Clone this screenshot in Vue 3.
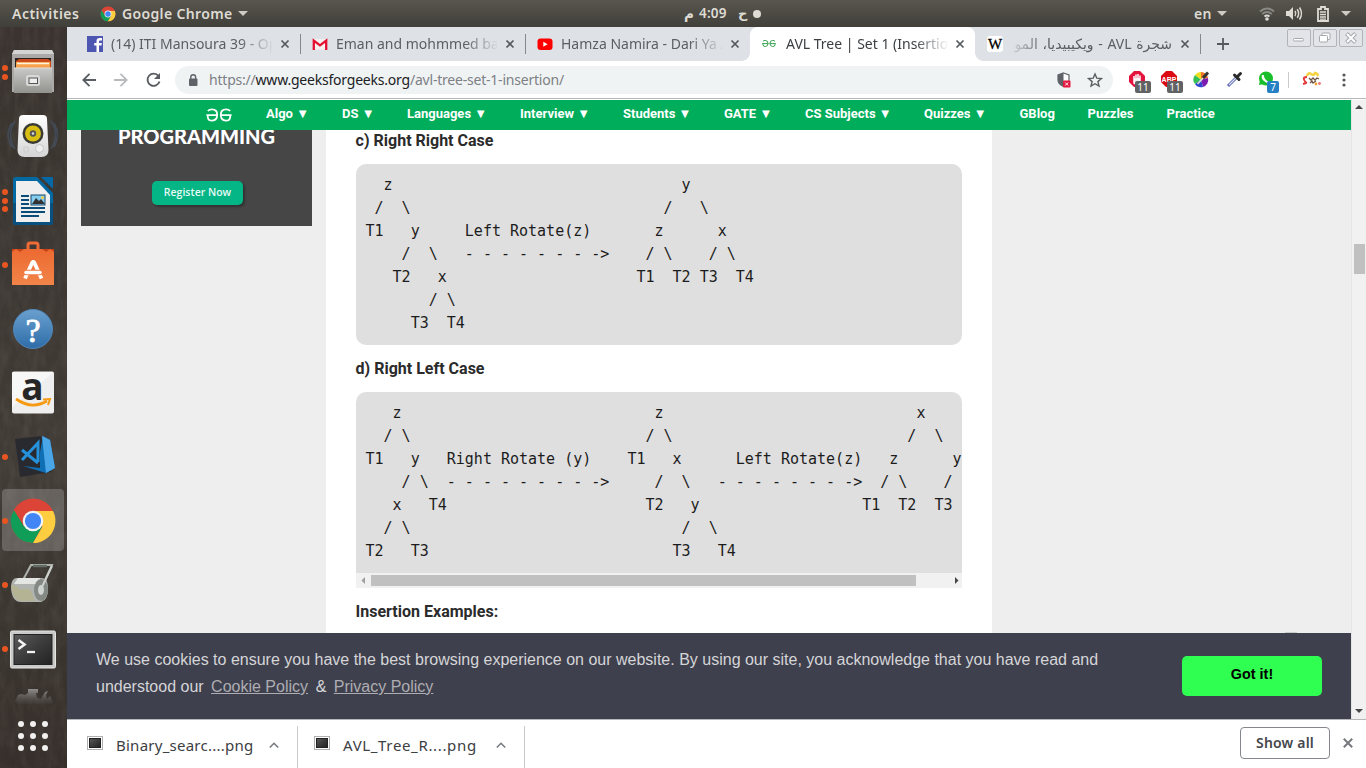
<script setup>
const place = (...items) =>
  items.reduce((line, [col, text]) => line.padEnd(col, ' ') + text, '')

const rightRight = [
  place([2, 'z'], [35, 'y']),
  place([1, '/'], [4, '\\'], [33, '/'], [37, '\\']),
  place([0, 'T1'], [5, 'y'], [11, 'Left Rotate(z)'], [32, 'z'], [39, 'x']),
  place([4, '/'], [7, '\\'], [11, '- - - - - - - ->'], [31, '/'], [33, '\\'], [38, '/'], [40, '\\']),
  place([3, 'T2'], [8, 'x'], [30, 'T1'], [34, 'T2'], [37, 'T3'], [41, 'T4']),
  place([7, '/'], [9, '\\']),
  place([5, 'T3'], [9, 'T4']),
].join('\n')

const rightLeft = [
  place([3, 'z'], [32, 'z'], [61, 'x']),
  place([2, '/'], [4, '\\'], [31, '/'], [33, '\\'], [60, '/'], [63, '\\']),
  place([0, 'T1'], [5, 'y'], [9, 'Right Rotate (y)'], [29, 'T1'], [34, 'x'], [41, 'Left Rotate(z)'], [58, 'z'], [65, 'y']),
  place([4, '/'], [6, '\\'], [9, '- - - - - - - - ->'], [32, '/'], [35, '\\'], [39, '- - - - - - - ->'], [57, '/'], [59, '\\'], [64, '/']),
  place([3, 'x'], [7, 'T4'], [31, 'T2'], [36, 'y'], [55, 'T1'], [59, 'T2'], [63, 'T3']),
  place([2, '/'], [4, '\\'], [35, '/'], [38, '\\']),
  place([0, 'T2'], [5, 'T3'], [34, 'T3'], [39, 'T4']),
].join('\n')

const tabs = [
  { id: 'fb', title: '(14) ITI Mansoura 39 - Op' },
  { id: 'gmail', title: 'Eman and mohmmed ba' },
  { id: 'yt', title: 'Hamza Namira - Dari Ya A' },
  { id: 'gfg', title: 'AVL Tree | Set 1 (Insertion', active: true },
  { id: 'wiki', title: 'شجرة AVL - ويكيبيديا، المو', rtl: true },
]

const menu = ['Algo ▼', 'DS ▼', 'Languages ▼', 'Interview ▼', 'Students ▼', 'GATE ▼', 'CS Subjects ▼', 'Quizzes ▼', 'GBlog', 'Puzzles', 'Practice']

const dock = [
  { id: 'files', dots: 2 }, { id: 'music', dots: 0 }, { id: 'writer', dots: 3 }, { id: 'software', dots: 1 },
  { id: 'help', dots: 0 }, { id: 'amazon', dots: 0 }, { id: 'code', dots: 1 }, { id: 'chrome', dots: 1, active: true },
  { id: 'scan', dots: 1 }, { id: 'term', dots: 1 },
]
const downloads = [
  { name: 'Binary_searc....png', cls: 'd1' },
  { name: 'AVL_Tree_R....png', cls: 'd2' },
]
</script>

<template>
  <div class="desktop">
    <svg class="defs" width="0" height="0">
      <defs>
        <symbol id="chrome" viewBox="0 0 48 48">
          <circle cx="24" cy="24" r="22" fill="#db4437" />
          <path d="M24 24 4.9 13A22 22 0 0 0 24 46L33 30Z" fill="#109d58" />
          <path d="M24 46A22 22 0 0 0 44 14H24L33.5 29.5Z" fill="#ffcd40" />
          <path d="M24 14H44A22 22 0 0 0 4.9 13L15 29.500Z" fill="#db4437" />
          <circle cx="24" cy="24" r="10.300" fill="#f4f4f4" />
          <circle cx="24" cy="24" r="8.100" fill="#4285f4" />
        </symbol>
        <symbol id="gfg" viewBox="0 0 26 14">
          <path d="M1.800 3Q3.300 1.300 6 1.300q5.200 0 5.200 5.500T6.200 12.700Q2 12.700 1.800 9V7.200M.4 7.200H11.800M24.200 3Q22.700 1.300 20 1.300q-5.200 0-5.200 5.500t5 5.900Q24 12.700 24.200 9V7.200M25.600 7.200H14.200" fill="none" stroke="currentColor" stroke-width="1.800" />
        </symbol>
      </defs>
    </svg>

    <header class="topbar">
      <span class="activities">Activities</span>
      <svg class="tb-chrome" width="16" height="16"><use href="#chrome" /></svg>
      <span class="app">Google Chrome</span>
      <svg class="caret" width="10" height="5"><path d="M0 0h10L5 5z" fill="#cfccc6" /></svg>
      <div class="clock"><span class="ar m">م</span><span class="time">4:09</span><span class="ar h">ح</span><i /></div>
      <div class="status">
        <span class="lang">en</span>
        <svg class="s-c" width="10" height="5"><path d="M0 0h10L5 5z" fill="#cfccc6" /></svg>
        <svg class="s-wifi" width="16" height="14" viewBox="0 0 16 14" fill="none" stroke-width="2">
          <path d="M1 4.500Q8-1.500 15 4.500" stroke="#8a8882" /><path d="M3.200 7Q8 3 12.800 7" stroke="#8a8882" /><path d="M5.500 9.500Q8 7.500 10.500 9.500" stroke="#dedbd5" /><circle cx="8" cy="12" r="1.800" fill="#dedbd5" />
        </svg>
        <svg class="s-vol" width="17" height="15" viewBox="0 0 17 15" fill="none" stroke="#dedbd5" stroke-width="1.500">
          <path d="M0 5h3l4-4v13l-4-4H0z" fill="#dedbd5" stroke="none" /><path d="M9 5q1.600 2.500 0 5M11.200 3.200q3 4.300 0 8.600M13.500 1.500q4 6 0 12" />
        </svg>
        <svg class="s-bat" width="12" height="16" viewBox="0 0 12 16"><path d="M1 3h3V1h4v2h3v12H1z" fill="none" stroke="#dedbd5" stroke-width="1.800" /><path d="M3 6h6M3 8.500h6M3 11h6M3 13.200h6" stroke="#dedbd5" stroke-width="1.300" /></svg>
        <svg class="s-c2" width="10" height="5"><path d="M0 0h10L5 5z" fill="#cfccc6" /></svg>
      </div>
    </header>

    <div class="body">
      <aside class="dock">
        <svg class="grain" width="67" height="741">
          <filter id="g"><feTurbulence type="fractalNoise" baseFrequency=".13 .05" numOctaves="3" seed="4" /><feColorMatrix values="0 0 0 0 .55  0 0 0 0 .5  0 0 0 0 .45  .9 .5 0 0 -.55" /></filter>
          <rect width="67" height="741" filter="url(#g)" opacity=".16" />
        </svg>
        <div v-for="d in dock" :key="d.id" class="cell" :class="{ on: d.active }">
          <div class="dots"><i v-for="n in d.dots" :key="n" /></div>
          <svg width="48" height="48" viewBox="0 0 48 48">
            <defs>
              <linearGradient id="silver" x1="0" y1="0" x2="0" y2="1"><stop offset="0" stop-color="#c9c9c7" /><stop offset="1" stop-color="#92928f" /></linearGradient>
              <linearGradient id="white" x1="0" y1="0" x2="0" y2="1"><stop offset="0" stop-color="#fff" /><stop offset="1" stop-color="#d5d5d5" /></linearGradient>
              <linearGradient id="blue" x1="0" y1="0" x2="0" y2="1"><stop offset="0" stop-color="#6aa0cf" /><stop offset="1" stop-color="#2e6ca8" /></linearGradient>
              <linearGradient id="orange" x1="0" y1="0" x2="0" y2="1"><stop offset="0" stop-color="#ec6a31" /><stop offset="1" stop-color="#f28449" /></linearGradient>
              <linearGradient id="dark" x1="0" y1="0" x2="1" y2="1"><stop offset="0" stop-color="#5b5b5b" /><stop offset=".5" stop-color="#3c3c3c" /><stop offset="1" stop-color="#222" /></linearGradient>
            </defs>
            <g v-if="d.id === 'files'">
              <path d="M5 1h38l2 4v38H3V5z" fill="#aaa9a7" /><path d="M5 1h38l2 4H3z" fill="#d4d4d2" />
              <path d="M6 9h36v12H6z" fill="#2b211d" /><path d="M7 12l3-2h29l3 2v8H7z" fill="#c94a1c" /><path d="M7 13h34v8H7z" fill="#f7a24a" /><path d="M8 14.500h32" stroke="#fff1df" stroke-width="1.500" />
              <path d="M5 19h38v25H5z" fill="url(#silver)" /><path d="M5 19h38" stroke="#dedede" />
              <rect x="17" y="26" width="14" height="11" rx="2.500" fill="#d8d8d6" /><rect x="20" y="29" width="8.500" height="5.500" fill="#eee" stroke="#555" />
            </g>
            <g v-else-if="d.id === 'music'">
              <path d="M6 8Q-3 22 6 36M42 8Q51 22 42 36M3 10Q-5 22 3 34M45 10Q52 22 45 34" stroke="#46576d" stroke-width="1.600" fill="none" opacity=".6" />
              <path d="M14 2h20q4 0 4 4l1.500 31q0 7-7 7h-17q-7 0-7-7L10 6q0-4 4-4z" fill="url(#white)" />
              <circle cx="24" cy="20.500" r="10.500" fill="#3a3a34" /><circle cx="24" cy="20.500" r="8" fill="#d8be12" /><circle cx="24" cy="20.500" r="3.200" fill="#555" /><circle cx="24" cy="20.500" r="1.200" fill="#ddd" />
              <circle cx="30.500" cy="35.500" r="4" fill="#eee" stroke="#c5c5c5" /><rect x="15" y="34" width="4" height="5" fill="none" stroke="#ccc" />
            </g>
            <g v-else-if="d.id === 'writer'">
              <path d="M7 0h21l16 16v29q0 3-3 3H7q-3 0-3-3V3q0-3 3-3z" fill="#0369a3" /><path d="M4 26h40v19q0 3-3 3H7q-3 0-3-3z" fill="#075080" />
              <path d="M32 0h12v12z" fill="#0668a6" /><path d="M7 4h21l13 14v27H7z" fill="#efefef" />
              <path d="M12 19h8M12 23h8M12 27h8M12 31h24M12 35h24M12 39h18" stroke="#0a4d78" stroke-width="2" />
              <rect x="22" y="18" width="14" height="10" fill="#84cdef" stroke="#164b6d" /><path d="M23 27l4-6 3 3 2-2 4 5z" fill="#333" /><circle cx="33.500" cy="20.500" r="1.500" fill="#f5d048" />
            </g>
            <g v-else-if="d.id === 'software'">
              <path d="M3 8h42v36H3z" fill="#c94317" /><path d="M3 11l4-3 4 3 4-3h18l4 3 4-3 4 3v33H3z" fill="url(#orange)" />
              <path d="M19 13V4q0-2 2-2h6q2 0 2 2v9" fill="none" stroke="#f06a35" stroke-width="3" />
              <path d="M16 37.500l7.500-16.500h1.500l7.500 16.500" fill="none" stroke="#fff" stroke-width="3.800" stroke-linejoin="bevel" /><path d="M17 31.500h14" stroke="#f17a42" stroke-width="5.500" stroke-linecap="round" /><path d="M17 31.500h14" stroke="#fff" stroke-width="3.500" stroke-linecap="round" />
            </g>
            <g v-else-if="d.id === 'help'">
              <circle cx="24" cy="24" r="19.500" fill="url(#blue)" stroke="#5188b9" /><text x="24" y="36.500" class="q">?</text>
            </g>
            <g v-else-if="d.id === 'amazon'">
              <rect x="3" y="2.500" width="42" height="42" rx="2" fill="#eee" /><path d="M3 3h42L3 38z" fill="#fff" opacity=".5" />
              <text x="23.500" y="30.500" class="a">a</text><path d="M7 30q16 11 31 2" stroke="#f59a12" stroke-width="2.800" fill="none" /><path d="M34 30.500l7-.500-2 6" stroke="#f59a12" stroke-width="2" fill="none" />
            </g>
            <g v-else-if="d.id === 'code'">
              <path d="M6 6l26-3 10 36-31 5z" fill="#292a30" />
              <path d="M14 33l17 2V19l3-16 7 4 5 28-9 5z" fill="#0f6fb5" /><path d="M33 3l4 37 9-5-5-28z" fill="#4ba6e8" /><path d="M13 17l16 13M13 27l16-17V29" stroke="#2491da" stroke-width="3" fill="none" />
            </g>
            <use v-else-if="d.id === 'chrome'" href="#chrome" />
            <g v-else-if="d.id === 'scan'">
              <path d="M14 19l8-15h21L33 26" stroke="#aeb3ae" stroke-width="2" fill="none" /><path d="M24 5h14" stroke="#646c66" stroke-width="2.500" />
              <path d="M7 17h26q6 0 6 11t-7 13H12Q3 41 2 27q0-9 5-10z" fill="#b0b3b0" /><path d="M9 17h22v6H5z" fill="#e4e6e4" /><path d="M2 24l6 1 2 3h11l5 12H11Q3 38 2 24z" fill="#b4b494" />
              <ellipse cx="32" cy="29" rx="7" ry="11" fill="#848984" /><ellipse cx="32" cy="29" rx="3" ry="5" fill="#d0d3d0" /><path d="M32 28L43 5" stroke="#cdd0cd" stroke-width="2" />
            </g>
            <g v-else>
              <rect x="1.500" y="6" width="45" height="37" rx="1.500" fill="#c9cac8" stroke="#e5e5e4" /><rect x="5" y="9.500" width="38" height="30" fill="url(#dark)" stroke="#222" />
              <path d="M9.500 15l6 4.500-6 4.500" fill="none" stroke="#f2f2f2" stroke-width="2.600" /><path d="M18 27h8" stroke="#f2f2f2" stroke-width="2.300" />
            </g>
          </svg>
        </div>
        <svg class="folded" width="42" height="16" viewBox="0 0 42 16"><linearGradient id="fade" x1="0" y1="0" x2="0" y2="1"><stop offset="0" stop-color="#908f8d" /><stop offset="1" stop-color="#655f5b" stop-opacity=".1" /></linearGradient><path d="M1 13l3-6 3-1 4 1 3-2V1h10v4h-2l1 5 4 1 4-7 3-1-2 4 1 4 3-3 3 6-2 2H3z" fill="url(#fade)" /></svg>
        <div class="apps"><i v-for="n in 9" :key="n" /></div>
      </aside>

      <main class="window">
        <div class="tabstrip">
          <div v-for="(t, i) in tabs" :key="t.id" class="tab" :class="[t.id, { active: t.active, sep: i < 2 || i === 4 }]">
            <svg v-if="t.id === 'fb'" class="fav" width="16" height="16"><rect width="16" height="16" fill="#4d56b0" /><path d="M9.500 16V9.500H7.200V7h2.300V5.300Q9.500 2 12.600 2H15v2.500h-1.700q-1.300 0-1.300 1.200V7h2.900l-.4 2.500H12V16z" fill="#fff" /></svg>
            <svg v-else-if="t.id === 'gmail'" class="fav" width="16" height="16"><path d="M1.500 3h13v10.500h-13z" fill="#f4f0ef" /><path d="M1.800 14V4.500L8 9.300l6.200-4.800V14" fill="none" stroke="#e50f32" stroke-width="2.300" /></svg>
            <svg v-else-if="t.id === 'yt'" class="fav" width="16" height="16"><rect x="0.500" y="2.500" width="15" height="11.500" rx="3" fill="#f00" /><path d="M6.300 5.700v5L10.600 8.200z" fill="#fff" /></svg>
            <svg v-else-if="t.id === 'gfg'" class="fav green" width="16" height="16"><use href="#gfg" x="0" y="3.500" width="14" height="8" /></svg>
            <svg v-else class="fav" width="16" height="16"><rect width="16" height="16" rx="3" fill="#fff" /><text x="8" y="13" class="w">W</text></svg>
            <span class="title" :dir="t.rtl ? 'rtl' : 'ltr'">{{ t.title }}</span>
            <svg class="x" width="8" height="8"><path d="M.5.500l7 7M7.500.500l-7 7" stroke="#54585c" stroke-width="1.700" /></svg>
          </div>
          <svg class="plus" width="12" height="12"><path d="M6 0v12M0 6h12" stroke="#55595e" stroke-width="1.800" /></svg>
          <div class="wm">
            <span><svg width="24" height="18"><rect x="6.500" y="9.500" width="10" height="2.500" rx="1" fill="#fff" stroke="#a5a7ad" /></svg></span>
            <span><svg width="24" height="18" fill="#fff" stroke="#a5a7ad"><rect x="9" y="4" width="8" height="6.500" rx="1" /><rect x="6.500" y="6.500" width="8" height="6.500" rx="1" /></svg></span>
            <span><svg width="24" height="18"><path d="M7.500 4.500l9 9M16.500 4.500l-9 9" stroke="#a5a7ad" stroke-width="4" /><path d="M8 5l8 8M16 5l-8 8" stroke="#fff" stroke-width="2" /></svg></span>
          </div>
        </div>

        <div class="toolbar">
          <svg class="back" width="14" height="14" fill="none" stroke="#5a5d61" stroke-width="1.800"><path d="M14 7H1.500M7.500.800L1.300 7l6.200 6.200" /></svg>
          <svg class="fwd" width="14" height="14" fill="none" stroke="#b8babc" stroke-width="1.800"><path d="M0 7h12.500M6.500.800L12.700 7l-6.200 6.200" /></svg>
          <svg class="reload" width="16" height="16" fill="none" stroke="#5a5d61" stroke-width="1.900"><path d="M12.500 4A6.100 6.100 0 1 0 13.500 9.500" /><path d="M14 1v6H8z" fill="#5a5d61" stroke="none" /></svg>
          <div class="omni">
            <svg class="lock" width="10" height="12"><rect x="1" y="4.500" width="8.500" height="7.500" rx="1" fill="#5f6368" /><path d="M2.800 5V3q0-2.300 2.400-2.300T7.600 3v2" fill="none" stroke="#5f6368" stroke-width="1.400" /></svg>
            <span class="url">https://<b>www.geeksforgeeks.org</b>/avl-tree-set-1-insertion/</span>
            <svg class="shield" width="15" height="16"><path d="M6.500 1L12 3v5q0 4-5.500 6.500Q1 12 1 8V3z" fill="#fff" stroke="#5f6368" stroke-width="1.200" /><path d="M6.500 1v13.500Q1 12 1 8V3z" fill="#5f6368" /><rect x="6" y="8.500" width="7.500" height="7" rx="1" fill="#e5173f" /><path d="M8.200 10.500l3 3M11.200 10.500l-3 3" stroke="#fff" /></svg>
            <svg class="star" width="14" height="14"><path d="M7 1l1.800 4.200 4.600.4-3.500 3 1.100 4.500L7 10.700l-4 2.400 1.100-4.500-3.500-3 4.600-.4z" fill="none" stroke="#5a5d61" stroke-width="1.400" /></svg>
          </div>
          <div class="ext e1"><svg width="18" height="18"><path d="M5 0h6l5 5v6l-5 5H5l-5-5V5z" fill="#e3133c" /><path d="M5 9V5M7 8V3.500M9 8V3M11 8.500V4.500M5 8h6v4q-3 3-6 0z" stroke="#fff" stroke-width="1.500" fill="#eee" /></svg><em>11</em></div>
          <div class="ext e2"><svg width="18" height="18"><path d="M5 0h6l5 5v6l-5 5H5l-5-5V5z" fill="#db0a12" /><text x="8" y="10.500" class="abp">ABP</text></svg><em>11</em></div>
          <svg class="e3" width="18" height="17"><path d="M8 8.500V1a7.500 7.500 0 0 1 7 6z" fill="#f17425" /><path d="M8 8.500l7-1.500a7.500 7.500 0 0 1-5 9z" fill="#7d1bb0" /><path d="M8 8.500l2 7.500a7.500 7.500 0 0 1-8-3z" fill="#3144ce" /><path d="M8 8.500L2 13a7.500 7.500 0 0 1 0-9z" fill="#35bf55" /><path d="M8 8.500L2 4a7.500 7.500 0 0 1 6-3z" fill="#f1dd22" /><path d="M4.500 13L12 5" stroke="#ddd" stroke-width="1.600" /><path d="M10 7l5-5.500" stroke="#333" stroke-width="3" /></svg>
          <svg class="e4" width="17" height="17"><path d="M2 15L11 6" stroke="#5862b2" stroke-width="3" /><path d="M3 14l7-7" stroke="#d8dcf5" stroke-width="1.300" /><path d="M8.500 4l4.500 4.500M11 6l3.500-3.500" stroke="#292929" stroke-width="3" stroke-linecap="round" /></svg>
          <div class="ext e5"><svg width="18" height="18"><circle cx="8" cy="7.500" r="7" fill="#19bf2b" /><path d="M1 14l1-5 4 4z" fill="#19bf2b" /><path d="M5 4q-1 3 2 5.500t4 1.500" stroke="#fff" stroke-width="2.200" fill="none" /></svg><em class="blue">7</em></div>
          <i class="vr" />
          <svg class="avatar" width="20" height="16"><path d="M5 4q1-4 4-2t4-1q4 1 2 3" fill="none" stroke="#f5d23c" stroke-width="2.500" /><path d="M5 5q-4 0-3 2.500t2 3-3 1.500" fill="none" stroke="#e63a3a" stroke-width="2" /><path d="M7 6l2 2 2-2 2 2 2-2 2 1M8 11l2-2 1 2 3-2" fill="none" stroke="#6d5541" stroke-width="1.300" /><circle cx="14" cy="12" r="1.400" fill="#f3a32c" /><circle cx="17.500" cy="11.500" r="1.400" fill="#e77" /></svg>
          <svg class="kebab" width="4" height="14" fill="#54585c"><circle cx="2" cy="2" r="1.600" /><circle cx="2" cy="7" r="1.600" /><circle cx="2" cy="12" r="1.600" /></svg>
        </div>

        <div class="view">
          <div class="page">
            <nav class="nav">
              <svg class="logo" width="26" height="14"><use href="#gfg" /></svg>
              <span v-for="m in menu" :key="m">{{ m }}</span>
            </nav>
            <div class="cols">
              <div class="ad"><div class="prog">PROGRAMMING</div><div class="reg">Register Now</div></div>
              <article>
                <h3>c) Right Right Case</h3>
                <pre>{{ rightRight }}</pre>
                <h3 class="h2">d) Right Left Case</h3>
                <pre class="scroll">{{ rightLeft }}</pre>
                <div class="hbar"><svg width="15" height="15"><path d="M9 4v7L5.500 7.500z" fill="#9d9d9d" /></svg><div class="hthumb" /><svg width="15" height="15"><path d="M8 4v7l3.500-3.500z" fill="#464646" /></svg></div>
                <h3 class="h3">Insertion Examples:</h3>
              </article>
              <div class="nub" />
            </div>
            <div class="cookie">
              <p>We use cookies to ensure you have the best browsing experience on our website. By using our site, you acknowledge that you have read and<br>understood our <a>Cookie Policy</a> &amp; <a>Privacy Policy</a></p>
              <button>Got it!</button>
            </div>
          </div>
          <div class="vbar"><svg width="14" height="15"><path d="M3 9h8L7 5z" fill="#464646" /></svg><div class="vthumb" /><svg width="14" height="15"><path d="M3 5h8L7 9z" fill="#464646" /></svg></div>
        </div>

        <footer class="downloads">
          <div v-for="d in downloads" :key="d.name" class="dl" :class="d.cls">
            <svg width="16" height="14"><rect x=".5" y=".5" width="15" height="13" fill="#fff" stroke="#b0b0b0" /><rect x="2.500" y="2.500" width="11" height="9" fill="url(#dark)" stroke="#222" /></svg>
            <span>{{ d.name }}</span>
            <svg class="up" width="10" height="6"><path d="M.8 5.500L5 1.300l4.200 4.200" fill="none" stroke="#777a7e" stroke-width="1.600" /></svg>
          </div>
          <div class="showall">Show all</div>
          <svg class="dx" width="10" height="10"><path d="M.8.800l8.400 8.400M9.200.800L.8 9.200" stroke="#77797c" stroke-width="2" /></svg>
        </footer>
      </main>
    </div>
  </div>
</template>

<style>
body { margin: 0; overflow: hidden; }
</style>

<style scoped>
* { box-sizing: border-box; }
.desktop { width: 1366px; height: 768px; overflow: hidden; font-family: "Noto Sans", "DejaVu Sans", sans-serif; display: flex; flex-direction: column; }
.defs { position: absolute; }
svg { display: block; flex: none; overflow: visible; }
.topbar { height: 27px; flex: none; background: linear-gradient(#59564f, #403f39); color: #dedbd3; display: flex; align-items: center; font-weight: 600; font-size: 14px; line-height: 27px; white-space: nowrap; }
.activities { margin-left: 12px; width: 88px; letter-spacing: .5px; }
.app { width: 110px; margin-left: 6px; letter-spacing: .35px; }
.caret { margin-left: 6px; }
.clock { margin-left: 436px; display: flex; align-items: center; width: 90px; font-size: 13.500px; }
.ar { font-family: "DejaVu Sans", sans-serif; font-weight: 700; }
.m { width: 15px; }
.time { width: 39px; letter-spacing: .2px; }
.h { width: 15px; font-size: 13px; }
.clock i { width: 8px; height: 8px; border-radius: 50%; background: #dedbd3; }
.status { margin-left: auto; width: 172px; display: flex; align-items: center; }
.lang { width: 23px; letter-spacing: .3px; }
.s-wifi { margin-left: 32px; }
.s-vol { margin-left: 11px; }
.s-bat { margin-left: 14px; }
.s-c2 { margin-left: 12px; }
.body { flex: 1; display: flex; min-height: 0; }
.dock { width: 67px; flex: none; background: linear-gradient(#3a332f, #3c3732 30%, #413c36 60%, #362f2b); padding-top: 14px; position: relative; display: flex; flex-direction: column; }
.grain { position: absolute; left: 0; top: 0; overflow: hidden; }
.cell { height: 64px; display: flex; align-items: center; position: relative; flex: none; }
.cell.on::before { content: ""; position: absolute; left: 2px; top: 0; width: 62px; height: 62px; border-radius: 4px; background: rgba(255, 255, 255, .2); }
.cell svg { position: relative; }
.dots { width: 9px; display: flex; flex-direction: column; gap: 2.500px; padding: 0 0 1px 2px; position: relative; }
.dots i { width: 6px; height: 6px; border-radius: 50%; background: #ea5420; }
.q { font: 34px "Liberation Serif", serif; fill: #fff; stroke: #fff; stroke-width: .8px; text-anchor: middle; }
.a { font: 700 37px "Open Sans", sans-serif; fill: #262626; text-anchor: middle; }
.folded { margin: 7px 0 0 14px; position: relative; }
.apps { display: grid; grid-template-columns: repeat(3, 6px); gap: 6px; margin: 17px 0 0 18px; position: relative; }
.apps i { width: 6px; height: 6px; border-radius: 50%; background: #f2f1f0; }
.window { flex: 1; min-width: 0; display: flex; flex-direction: column; background: #fff; }
.tabstrip { height: 34px; flex: none; background: #dee1e6; padding-left: 8px; display: flex; position: relative; }
.tab { width: 225px; height: 34px; display: flex; align-items: center; padding-left: 12px; position: relative; }
.tab.sep::after { content: ""; position: absolute; right: -1px; top: 7px; width: 1px; height: 20px; background: #85888d; }
.tab.active { background: #fff; border-radius: 8px 8px 0 0; }
.tab.active::before, .tab.active::after { content: ""; position: absolute; bottom: 0; width: 8px; height: 8px; }
.tab.active::before { left: -8px; background: radial-gradient(circle at 0 0, transparent 7.500px, #fff 8px); }
.tab.active::after { right: -8px; background: radial-gradient(circle at 100% 0, transparent 7.500px, #fff 8px); }
.title { margin-left: 8px; width: 161px; font-size: 14px; color: #5b5e63; white-space: nowrap; overflow: hidden; line-height: 24px; -webkit-mask-image: linear-gradient(90deg, #000 128px, transparent 163px); mask-image: linear-gradient(90deg, #000 128px, transparent 163px); }
.active .title { color: #3c4043; }
.wiki .title { word-spacing: 1px; -webkit-mask-image: linear-gradient(270deg, #000 128px, transparent 163px); mask-image: linear-gradient(270deg, #000 128px, transparent 163px); }
.x { margin-left: 9px; }
.green { color: #2f9f4c; }
.w { font: 15px "Liberation Serif", serif; text-anchor: middle; stroke: #000; stroke-width: .3px; }
.plus { margin: 11px 0 0 17px; }
.wm { margin: 2px 3px 0 auto; display: flex; gap: 2px; }
.wm span { width: 24px; height: 18px; border: 1px solid #b2b4b9; border-radius: 2px; background: #e2e4e8; }
.wm svg { margin: -1px; }
.toolbar { height: 37px; flex: none; display: flex; align-items: center; }
.back { margin-left: 15px; }
.fwd { margin-left: 18px; }
.reload { margin-left: 18px; }
.omni { margin-left: 13px; width: 938px; height: 28px; border-radius: 14px; background: #f0f3f4; display: flex; align-items: center; }
.lock { margin-left: 13px; }
.url { margin-left: 11px; width: 849px; font-size: 14px; color: #7d8084; white-space: nowrap; letter-spacing: -.21px; }
.url b { font-weight: 400; color: #202124; }
.shield { margin-left: -1px; }
.star { margin-left: 16px; }
.ext { position: relative; width: 18px; height: 18px; }
.ext em { position: absolute; left: 6px; top: 10px; width: 16px; height: 12px; border-radius: 2px; background: #606264; color: #fff; font: 10px/12px "Noto Sans", sans-serif; text-align: center; }
.ext em.blue { left: 9px; width: 12px; background: #2581c4; }
.e1 { margin-left: 16px; }
.e2 { margin-left: 14px; }
.e3 { margin-left: 14px; }
.e4 { margin-left: 15px; }
.e5 { margin-left: 15px; }
.vr { width: 1px; height: 16px; background: #c9cbce; margin-left: 12px; }
.avatar { margin-left: 13px; }
.kebab { margin-left: 20px; }
.abp { font: 700 7px "Liberation Sans", sans-serif; fill: #fff; text-anchor: middle; }
.view { height: 621px; flex: none; display: flex; border-top: 1px solid #b7b7b9; padding-top: 1px; }
.page { width: 1284px; display: flex; flex-direction: column; background: #eee; overflow: hidden; }
.nav { height: 30px; flex: none; background: #00ad5b; display: grid; grid-template-columns: 60px 76px 65px 113px 103px 101px 81px 119px 95.500px 68px 79px auto; padding-left: 139px; color: #fff; font: 700 13px/28px Roboto, sans-serif; white-space: nowrap; }
.logo { margin-top: 8px; }
.cols { height: 503px; flex: none; display: flex; position: relative; }
.ad { margin-left: 14px; width: 231px; height: 96px; background: #464646; overflow: hidden; }
.prog { margin-top: -8px; text-align: center; height: 27px; font: 900 20px/28px Lato, sans-serif; color: #fff; }
.reg { margin: 32px 0 0 71px; width: 91px; height: 24px; border-radius: 5px; background: #04b586; box-shadow: 2px 2px 2px #333; color: #e7faf4; font: 600 10.500px/22px "Open Sans", sans-serif; text-align: center; }
article { margin-left: 14px; width: 666px; height: 503px; background: #fff; padding: 0 30px; }
h3 { margin: 0; height: 34px; text-indent: -.4px; font: 700 16px/22px Roboto, sans-serif; color: #2b2b2b; white-space: nowrap; }
.h2 { margin-top: 13px; }
.h3 { margin-top: 13px; }
pre { margin: 0; width: 606px; height: 181px; padding: 10px 9.500px; background: #dfdfdf; border-radius: 10px; font: 15px/23px "DejaVu Sans Mono", monospace; color: #1c1c1c; overflow: hidden; }
pre.scroll { border-radius: 10px 10px 0 0; }
.hbar { width: 606px; height: 15px; background: #f1f1f1; display: flex; justify-content: space-between; align-items: center; }
.hthumb { width: 545px; height: 11px; background: #c0c0c0; margin-right: auto; }
.nub { position: absolute; left: 1218px; bottom: 0; width: 12px; height: 1px; background: #ccc; }
.cookie { height: 86px; flex: none; background: #3f404d; display: flex; padding: 13px 29px; color: #d5d5d8; }
.cookie p { margin: 0; font: 16px/27px "Liberation Sans", sans-serif; width: 1040px; white-space: nowrap; }
.cookie a { color: #adadb2; text-decoration: underline; margin: 0 3.200px 0 3px; }
.cookie button { margin: 10px 0 0 auto; width: 140px; height: 40px; border: 0; border-radius: 5px; background: #2eff50; font: 700 14.400px/18px "Liberation Sans", sans-serif; color: #000; padding: 0 0 4px; }
.vbar { width: 15px; background: #f1f1f1; border-left: 1px solid #e4e4e4; display: flex; flex-direction: column; align-items: center; }
.vthumb { width: 11px; height: 30px; margin: 129px 0 auto; background: #c0c0c0; }
.downloads { flex: 1; border-top: 1px solid #b7b7b9; display: flex; background: #fff; }
.dl { display: flex; align-items: center; margin-top: 6px; border-right: 1px solid #c9cacc; padding-bottom: 1px; font-size: 15px; color: #3c4043; height: 42px; }
.dl > svg:first-child { margin: -7px 0 0 20px; }
.dl span { width: 137px; margin: -4px 0 0 13px; white-space: nowrap; letter-spacing: .25px; }
.dl .up { margin: -4px 0 0 16px; }
.d1 { width: 231px; }
.d2 { width: 227px; }
.d2 span { letter-spacing: .65px; }
.d2 > svg:first-child { margin-left: 16px; }
.showall { margin: 7px 0 0 auto; width: 90px; height: 32px; border: 1px solid #84888c; border-radius: 4px; font-weight: 600; font-size: 14px; line-height: 30px; color: #45484c; text-align: center; letter-spacing: .2px; }
.dx { margin: 18px 13px 0; }
</style>
